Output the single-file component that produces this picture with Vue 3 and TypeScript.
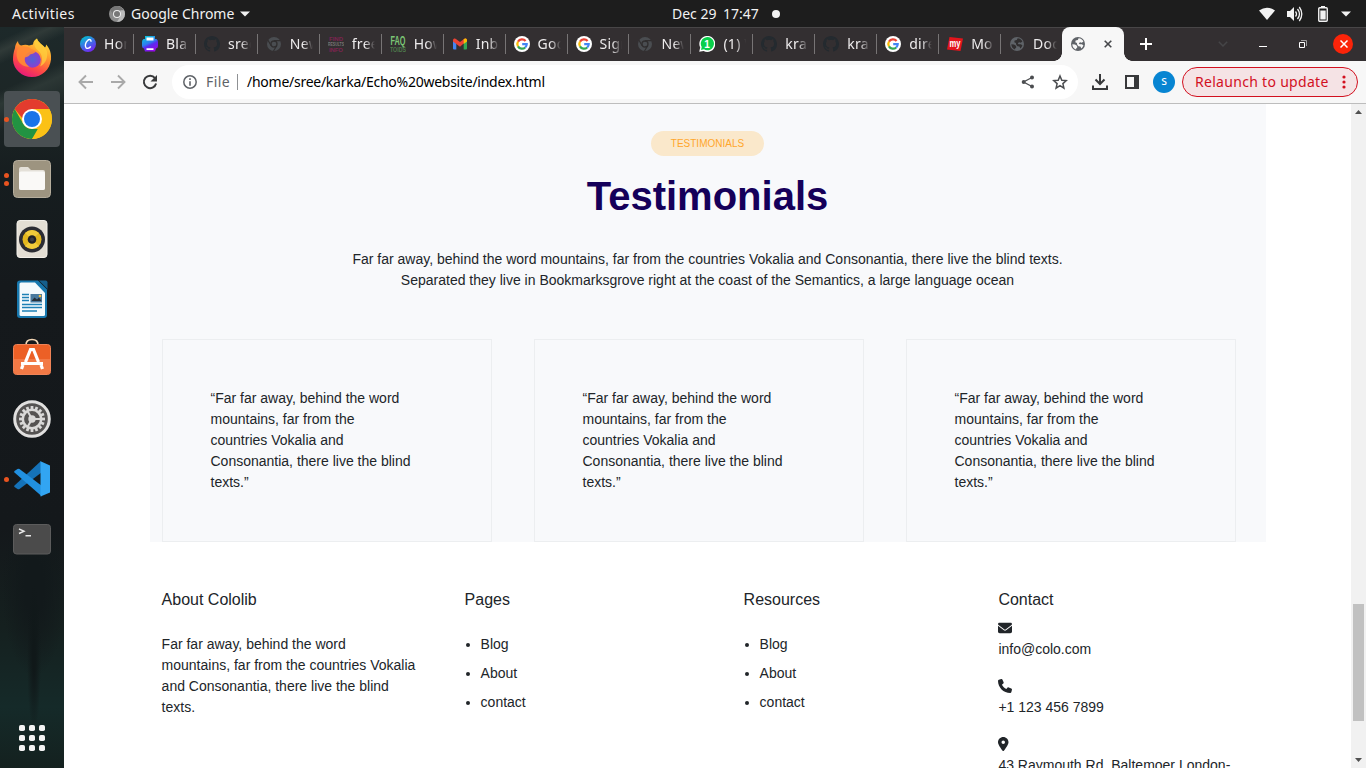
<script setup lang="ts">
interface Tab {
  icon: string
  title: string
}

const tabs: Tab[] = [
  { icon: 'canva', title: 'Hom' },
  { icon: 'printer', title: 'Bla' },
  { icon: 'github', title: 'sree' },
  { icon: 'chrome', title: 'New' },
  { icon: 'results', title: 'free' },
  { icon: 'faq', title: 'How' },
  { icon: 'gmail', title: 'Inb' },
  { icon: 'google', title: 'Goo' },
  { icon: 'google', title: 'Sign' },
  { icon: 'chrome', title: 'New' },
  { icon: 'whatsapp', title: '(1) W' },
  { icon: 'github', title: 'kra' },
  { icon: 'github', title: 'kra' },
  { icon: 'google', title: 'dire' },
  { icon: 'my', title: 'Mo' },
  { icon: 'globe', title: 'Doc' },
]

const quote = '“Far far away, behind the word\nmountains, far from the\ncountries Vokalia and\nConsonantia, there live the blind\ntexts.”'
const quotes: string[] = [quote, quote, quote]

const about = 'Far far away, behind the word\nmountains, far from the countries Vokalia\nand Consonantia, there live the blind\ntexts.'
const intro = 'Far far away, behind the word mountains, far from the countries Vokalia and Consonantia, there live the blind texts.\nSeparated they live in Bookmarksgrove right at the coast of the Semantics, a large language ocean'

const linkColumns = [
  { title: 'Pages', links: ['Blog', 'About', 'contact'] },
  { title: 'Resources', links: ['Blog', 'About', 'contact'] },
]

const contacts = [
  {
    text: 'info@colo.com',
    width: 14,
    box: '0 0 512 512',
    path: 'M48 64C21.500 64 0 85.500 0 112c0 15.100 7.100 29.300 19.200 38.400L236.800 313.600c11.400 8.500 27 8.500 38.400 0L492.800 150.400c12.100-9.100 19.200-23.300 19.200-38.400c0-26.500-21.500-48-48-48H48zM0 176V384c0 35.300 28.700 64 64 64H448c35.300 0 64-28.700 64-64V176L294.400 339.200c-22.800 17.100-54 17.100-76.800 0L0 176z',
  },
  {
    text: '+1 123 456 7899',
    width: 14,
    box: '0 0 512 512',
    path: 'M164.900 24.600c-7.700-18.600-28-28.500-47.400-23.200l-88 24C12.100 30.200 0 46 0 64C0 311.400 200.600 512 448 512c18 0 33.800-12.100 38.600-29.500l24-88c5.300-19.400-4.600-39.700-23.200-47.400l-96-40c-16.300-6.800-35.200-2.100-46.300 11.600L304.700 368C234.300 334.700 177.300 277.700 144 207.300L193.300 167c13.700-11.200 18.400-30 11.600-46.300l-40-96z',
  },
  {
    text: '43 Raymouth Rd. Baltemoer London-',
    width: 10.5,
    box: '0 0 384 512',
    path: 'M215.700 499.200C267 435 384 279.400 384 192C384 86 298 0 192 0S0 86 0 192c0 87.400 117 243 168.300 307.200c12.300 15.300 35.100 15.300 47.400 0zM192 128a64 64 0 1 1 0 128 64 64 0 1 1 0-128z',
  },
]

const dockDots: Record<string, number> = { chrome: 1, files: 2, code: 1 }
const dock: string[] = ['firefox', 'chrome', 'files', 'music', 'writer', 'software', 'settings', 'code', 'terminal']

const gridCells = [0, 10, 20]
const teeth = Array.from({ length: 16 }, (_, i) => i * 22.5)

const globeLand = 'M8.600 2.300c2.200 0 4 1.300 4.800 3.200l-1.600 1.300-1.700-.6-1.300 1 .8 1.100h2.200l1.600.9c-.3 1.300-1 2.400-2 3.200l-1-1.800-2-.4-1.200-1.500-.3-1.700-1.600-.8.3-1.700 2.200-.4zM2.300 8.300l2.700.2 1.900 1.300.5 1.500-1.200 1.300-.2 1C4 13 2.400 11 2.300 8.300z'
</script>

<template>
  <div class="desktop">
    <header class="panel">
      <div class="panel-left">
        <span class="activities">Activities</span>
        <svg class="app-icon" width="16" height="16" viewBox="0 0 16 16">
          <circle cx="8" cy="8" r="8" fill="#8c8c8c" />
          <path d="M8 0a8 8 0 0 1 8 8 8 8 0 0 1-8 8l3.500-6V4.300z" fill="#b9b9b9" />
          <path d="M8 4.200H15A8 8 0 0 0 1.200 3.800L4.500 9z" fill="#777" />
          <circle cx="8" cy="8" r="4" fill="#eee" />
          <circle cx="8" cy="8" r="3" fill="#777" />
        </svg>
        <span class="app-name">Google Chrome</span>
        <svg class="caret" width="10" height="6" viewBox="0 0 10 6"><path d="M0 .5h10L5 5.500z" fill="#f2f2f2" /></svg>
      </div>
      <div class="clock"><span>Dec 29</span><span>17:47</span><i class="notice"></i></div>
      <div class="panel-right">
        <svg width="16" height="14" viewBox="0 0 16 14"><path d="M0 3.500Q8-2.200 16 3.500L8 13z" fill="#f2f2f2" /></svg>
        <svg width="16" height="16" viewBox="0 0 16 16">
          <path d="M0 5h3l4-4v14l-4-4H0z" fill="#f2f2f2" />
          <path d="M8.500 5.500q2 2.500 0 5M10.500 3q4 5 0 10M12.300 1q5 7 0 14" fill="none" stroke="#f2f2f2" stroke-width="1.300" />
        </svg>
        <svg width="10" height="16" viewBox="0 0 10 16">
          <path d="M3 0h4v2H3z" fill="#f2f2f2" />
          <rect x=".75" y="1.750" width="8.500" height="13.500" rx="1" fill="none" stroke="#f2f2f2" stroke-width="1.400" />
          <path d="M2.300 4.500h5.400v9H2.300z" fill="#f2f2f2" />
        </svg>
        <svg class="caret" width="10" height="6" viewBox="0 0 10 6"><path d="M0 .5h10L5 5.500z" fill="#f2f2f2" /></svg>
      </div>
    </header>

    <div class="workspace">
      <aside class="dock">
        <div v-for="name in dock" :key="name" class="dock-item" :class="{ active: name === 'chrome' }">
          <div class="dots"><i v-for="n in dockDots[name] || 0" :key="n"></i></div>
          <svg width="56" height="56" viewBox="0 0 56 56">
            <template v-if="name === 'firefox'">
              <defs>
                <linearGradient id="ff-body" x1=".8" y1="0" x2=".3" y2="1">
                  <stop offset="0" stop-color="#ffe83e" /><stop offset=".35" stop-color="#ffa02e" />
                  <stop offset=".7" stop-color="#ff4a45" /><stop offset="1" stop-color="#e5177d" />
                </linearGradient>
                <radialGradient id="ff-core"><stop offset="0" stop-color="#4f63d8" /><stop offset="1" stop-color="#8b3fd0" /></radialGradient>
              </defs>
              <path d="M11 17c0-2 1-5 3-7 0 2 1 3.500 3 4.500 3-1 6-1 8 0l4-1c0-3 2-5 4-6 1 4 6 6 8 9 1-1 1-2 1-3 4 4 5.500 9 5 15-1 10-9 17.500-19 17.500S9.500 38.500 9 29c0-4 .5-8 2-12z" fill="url(#ff-body)" />
              <circle cx="28.500" cy="28.500" r="8.300" fill="url(#ff-core)" />
              <path d="M15 17c4-2 9-2 12 1 2 1 4 1 5 2 0 2-4 3-6 3.500-1 2-3 2-5 3-1 3 1 8 5 9-6 1-12-3-13-9-1-4 0-8 2-9.500z" fill="#ff8b35" opacity=".9" />
              <path d="M33 7.500c-4 4-3 9 1 12 5 4 5 11 2 16 6-3 8-9 7-15-2-6-9-8-10-13z" fill="#ffcf3e" opacity=".75" />
            </template>
            <template v-else-if="name === 'chrome'">
              <circle cx="28" cy="28" r="20" fill="#fbc116" />
              <path d="M10.680 18A20 20 0 0 1 45.320 18H28l-9 10z" fill="#e33b2e" />
              <path d="M10.680 18L19.340 33A10 10 0 0 0 28 38h8.660L28 48A20 20 0 0 1 10.680 18z" fill="#229342" />
              <path d="M36.660 33A10 10 0 0 0 36.660 23L34 18H45.320A20 20 0 0 1 28 48z" fill="#fbc116" />
              <circle cx="28" cy="28" r="10" fill="#fff" />
              <circle cx="28" cy="28" r="8" fill="#1a73e8" />
            </template>
            <template v-else-if="name === 'files'">
              <rect x="9.500" y="9.500" width="37" height="37" rx="4" fill="#9d9480" stroke="#b5ad9c" />
              <path d="M15 18q0-2 2-2h7l3 3h12q2 0 2 2v16q0 2-2 2H17q-2 0-2-2z" fill="#e4e0d8" />
              <rect x="15" y="20.500" width="26" height="18.500" rx="2" fill="#faf9f7" />
            </template>
            <template v-else-if="name === 'music'">
              <rect x="13" y="9.500" width="30" height="37" rx="3" fill="#e3ded4" stroke="#f3f0ea" />
              <circle cx="28" cy="28.500" r="13" fill="#2b2c33" />
              <circle cx="28" cy="28.500" r="9.500" fill="#e2b61e" />
              <path d="M28 28.500L21 22q7-6 14 0zM28 28.500l7 6.500q-7 6-14 0z" fill="#f5d142" opacity=".8" />
              <circle cx="28" cy="28.500" r="4.300" fill="#202126" />
              <circle cx="28" cy="28.500" r="2" fill="#3c3d44" />
            </template>
            <template v-else-if="name === 'writer'">
              <path d="M16 9.500h18l9 9V44q0 3-3 3H16q-3 0-3-3V12.500q0-3 3-3z" fill="#1878ae" />
              <path d="M35 9.500h6.500q2 0 2 2V18z" fill="#155f8c" />
              <path d="M15.500 13q0-1.500 1.500-1.500h14L41 22v21.500q0 1.500-1.500 1.500H17q-1.500 0-1.500-1.500z" fill="#f5fafc" />
              <path d="M18 23.500h7M18 26.500h7M18 29.500h7M18 33.500h20M18 36.500h20M18 40h15" stroke="#1d80b5" stroke-width="1.400" />
              <rect x="26.500" y="23" width="11.500" height="8.500" fill="#49799d" />
              <path d="M27.500 30l3-3.500 2.500 2 2-2 2.500 3.500z" fill="#252f38" />
              <circle cx="36" cy="25" r="1.300" fill="#f6be3e" />
            </template>
            <template v-else-if="name === 'software'">
              <path d="M22 14q0-5.500 6-5.500t6 5.500" fill="none" stroke="#f3d6b5" stroke-width="1.600" />
              <rect x="9.500" y="13.500" width="37" height="30" rx="3" fill="#ec6026" stroke="#ef8357" />
              <path d="M10 28h36v12.500q0 2.500-2.500 2.500h-31q-2.500 0-2.500-2.500z" fill="#f27945" />
              <path d="M21.500 31L26.500 18.500h3L34.500 31M17 32.500h22M19 34l-1.500 4M37 34l1.500 4" stroke="#fff" stroke-width="3.200" fill="none" />
            </template>
            <template v-else-if="name === 'settings'">
              <circle cx="28" cy="28" r="17.300" fill="#555352" stroke="#e1e0df" stroke-width="3" />
              <rect v-for="a in teeth" :key="a" x="26.600" y="15" width="2.800" height="4" fill="#d9d8d7" :transform="`rotate(${a} 28 28)`" />
              <circle cx="28" cy="28" r="9.200" fill="none" stroke="#d9d8d7" stroke-width="2.500" />
              <circle cx="28" cy="28" r="3.700" fill="#d9d8d7" />
              <path d="M28 28h9M28 28l-4.500-8M28 28l-4.500 8" stroke="#d9d8d7" stroke-width="2" />
            </template>
            <template v-else-if="name === 'code'">
              <path d="M37 10L10.500 34.500q-.7.700 0 1.400L13.500 38q1 .6 2 0L37.500 21.500z" fill="#1572b8" />
              <path d="M10.500 21.500q-.7-.7 0-1.400L13.500 18q1-.6 2 0L38 35v10.500z" fill="#2190e0" />
              <path d="M36.500 10.200L46 14.500v27l-9.500 4z" fill="#32a5f2" />
            </template>
            <template v-else>
              <rect x="9.500" y="13.500" width="37" height="29.500" rx="3" fill="#4b4b4b" stroke="#5c5c5c" />
              <path d="M15 18l5 2.200-5 2.300M21.500 24.800h5.500" stroke="#e8e8e8" stroke-width="1.400" fill="none" />
            </template>
          </svg>
        </div>
        <svg class="app-grid" width="26" height="26" viewBox="0 0 26 26">
          <template v-for="y in gridCells" :key="y">
            <rect v-for="x in gridCells" :key="x" :x="x" :y="y" width="6" height="6" rx="1.800" fill="#f4f4f4" />
          </template>
        </svg>
      </aside>

      <section class="browser">
        <div class="tab-strip">
          <div v-for="(tab, i) in tabs" :key="i" class="tab">
            <svg class="favicon" width="16" height="16" viewBox="0 0 16 16">
              <template v-if="tab.icon === 'canva'">
                <defs><linearGradient id="canva" x1=".2" y1="0" x2=".8" y2="1"><stop offset="0" stop-color="#00c4cc" /><stop offset=".5" stop-color="#3f6be8" /><stop offset="1" stop-color="#7d1af0" /></linearGradient></defs>
                <circle cx="8" cy="8" r="8" fill="url(#canva)" />
                <path d="M10.800 5.800c.8-2.300-1.600-2.900-3.200-1.300C5.500 6.500 4.600 10 6 11.700c1.400 1.300 3.600.5 4.700-1.400" fill="none" stroke="#fff" stroke-width="1.400" />
              </template>
              <template v-else-if="tab.icon === 'printer'">
                <defs><linearGradient id="printer" x1=".2" y1="0" x2=".7" y2="1"><stop offset="0" stop-color="#07c9d8" /><stop offset=".45" stop-color="#2f7cf0" /><stop offset=".6" stop-color="#5a2cf0" /><stop offset="1" stop-color="#9a08e8" /></linearGradient></defs>
                <path d="M3 0h10v3h1.500Q16 4 16 6v4q0 2-2 2.500L13 15.500H3l-1-3Q0 12 0 10V6q0-2 1.500-3H3z" fill="url(#printer)" />
                <path d="M4.500 1.500h7v3h-7zM4.500 12.300h7v1.800h-7z" fill="#fff" />
              </template>
              <path v-else-if="tab.icon === 'github'" d="M8 0C3.580 0 0 3.580 0 8c0 3.540 2.290 6.530 5.470 7.590.4.070.55-.17.55-.38v-1.490c-2.010.37-2.530-.49-2.690-.94-.09-.23-.48-.94-.82-1.130-.28-.15-.68-.52-.01-.53.63-.01 1.080.58 1.230.82.72 1.210 1.870.87 2.330.66.070-.52.280-.87.510-1.070-1.780-.2-3.640-.89-3.640-3.950 0-.87.310-1.590.82-2.150-.08-.2-.36-1.020.08-2.120 0 0 .67-.21 2.200.82a7.600 7.600 0 0 1 4 0c1.530-1.040 2.200-.82 2.200-.82.440 1.100.160 1.920.080 2.120.510.560.820 1.270.820 2.150 0 3.070-1.870 3.750-3.650 3.950.290.250.540.730.540 1.480v2.200c0 .210.150.460.550.380A8 8 0 0 0 16 8c0-4.420-3.580-8-8-8z" fill="#242a2f" />
              <template v-else-if="tab.icon === 'chrome'">
                <circle cx="8" cy="8" r="7" fill="#4a4d51" />
                <circle cx="8" cy="8" r="3" fill="#4a4d51" stroke="#302e2f" stroke-width="1.300" />
                <path d="M8 4.700h6.500M5.200 9.700L2 4.200M10.700 9.700L7.500 15" stroke="#302e2f" stroke-width="1.200" />
              </template>
              <template v-else-if="tab.icon === 'results'">
                <text x="8" y="5" class="mini pink" font-size="6" textLength="14">FIND</text>
                <text x="8" y="10" class="mini grey" font-size="5" textLength="16" lengthAdjust="spacingAndGlyphs">RESULTS</text>
                <text x="8" y="15.500" class="mini pink" font-size="6" textLength="14">INFO</text>
              </template>
              <template v-else-if="tab.icon === 'faq'">
                <text x="8" y="8.800" class="mini green" font-size="12" textLength="15" lengthAdjust="spacingAndGlyphs">FAQ</text>
                <text x="8" y="15.800" class="mini dim" font-size="8" textLength="16" lengthAdjust="spacingAndGlyphs">TOIDS</text>
              </template>
              <template v-else-if="tab.icon === 'gmail'">
                <path d="M1 4v8.500q0 1 1 1h2.300V6.500z" fill="#4285f4" />
                <path d="M15 4v8.500q0 1-1 1h-2.300V6.500z" fill="#34a853" />
                <path d="M1 4.500C1 2.500 3 2 4.300 3.200L8 6l3.700-2.800C13 2 15 2.500 15 4.500L8 10.700 1 5.500z" fill="#ea4335" />
                <path d="M11.700 3.200C13 2 15 2.500 15 4.500v1L11.700 8z" fill="#fbbc04" />
              </template>
              <template v-else-if="tab.icon === 'google'">
                <circle cx="8" cy="8" r="8" fill="#fff" />
                <g fill="none" stroke-width="2.200">
                  <path d="M11.600 5A4.700 4.700 0 0 0 4 5.600" stroke="#ea4335" />
                  <path d="M4 5.600a4.700 4.700 0 0 0 0 4.800" stroke="#fbbc05" />
                  <path d="M4 10.400a4.700 4.700 0 0 0 7.200 1.100" stroke="#34a853" />
                  <path d="M11.200 11.500A4.700 4.700 0 0 0 12.700 8.200H8.200" stroke="#4285f4" />
                </g>
              </template>
              <template v-else-if="tab.icon === 'whatsapp'">
                <path d="M.2 15.800l1-4.200A8 8 0 1 1 4.600 15z" fill="#fff" />
                <path d="M2 14l.7-3A6.600 6.600 0 1 1 5 13.300z" fill="#08cf4a" />
                <text x="8" y="11.500" class="mini white" font-size="10">1</text>
              </template>
              <template v-else-if="tab.icon === 'my'">
                <path d="M2.500 1L16 2.500 13.500 15 0 13.500z" fill="#e3151c" />
                <text x="8" y="10.500" class="mini white" font-size="11" textLength="11" lengthAdjust="spacingAndGlyphs">my</text>
              </template>
              <template v-else>
                <circle cx="8" cy="8" r="7" fill="#5f6368" />
                <path :d="globeLand" fill="#302e2f" />
              </template>
            </svg>
            <span class="tab-title">{{ tab.title }}</span>
            <i v-if="i < tabs.length - 1" class="divider"></i>
          </div>
          <div class="tab-active">
            <svg width="14" height="14" viewBox="1 1 14 14">
              <circle cx="8" cy="8" r="7" fill="#5f6368" />
              <path :d="globeLand" fill="#f7f7f7" />
            </svg>
            <svg width="8" height="8" viewBox="0 0 8 8"><path d="M.7.7l6.600 6.600M7.300.7L.7 7.300" stroke="#45474a" stroke-width="1.600" /></svg>
          </div>
          <svg class="new-tab" width="12" height="12" viewBox="0 0 12 12"><path d="M6 0v12M0 6h12" stroke="#fff" stroke-width="2" /></svg>
          <div class="window-controls">
            <svg width="10" height="6" viewBox="0 0 10 6"><path d="M.8.800L5 5 9.200.8" fill="none" stroke="#454547" stroke-width="1.500" /></svg>
            <svg width="8" height="8" viewBox="0 0 8 8"><path d="M0 6.500h8" stroke="#fff" /></svg>
            <svg width="8" height="8" viewBox="0 0 8 8"><path d="M.5 2.500h5v5h-5z" fill="none" stroke="#fff" /><path d="M2 .5h5.500V6" fill="none" stroke="#aaa" stroke-width=".9" /></svg>
            <span class="close"><svg width="8" height="8" viewBox="0 0 8 8"><path d="M.5.5l7 7M7.500.5l-7 7" stroke="#fff" stroke-width="1.500" /></svg></span>
          </div>
        </div>

        <div class="toolbar">
          <div class="nav">
            <svg width="16" height="16" viewBox="0 0 16 16"><path d="M15 8H2M8 1.500L1.500 8 8 14.500" fill="none" stroke="#a9a9a9" stroke-width="1.900" /></svg>
            <svg width="16" height="16" viewBox="0 0 16 16"><path d="M1 8h13M8 1.500L14.500 8 8 14.500" fill="none" stroke="#a9a9a9" stroke-width="1.900" /></svg>
            <svg width="16" height="16" viewBox="0 0 16 16"><path d="M13 4.100A6.200 6.200 0 1 0 14.100 9.500" fill="none" stroke="#38393b" stroke-width="2" /><path d="M15 1v6.500H8.500z" fill="#38393b" /></svg>
          </div>
          <div class="omnibox">
            <svg width="14" height="14" viewBox="0 0 14 14"><circle cx="7" cy="7" r="6.200" fill="none" stroke="#5f6368" stroke-width="1.500" /><path d="M7 3.200v1.700M7 6.200v4.600" stroke="#5f6368" stroke-width="1.600" /></svg>
            <span class="scheme">File</span>
            <i class="scheme-divider"></i>
            <span class="url">/home/sree/karka/Echo%20website/index.html</span>
            <svg class="share" width="14" height="14" viewBox="0 0 14 14"><path d="M11 2.500L2.500 7l8.500 4.500" fill="none" stroke="#4b4d50" stroke-width="1.300" /><circle cx="11" cy="2.500" r="2" fill="#4b4d50" /><circle cx="2.700" cy="7" r="2" fill="#4b4d50" /><circle cx="11" cy="11.500" r="2" fill="#4b4d50" /></svg>
            <svg class="star" width="16" height="16" viewBox="0 0 16 16"><path d="M8 2l1.800 4.200 4.500.4-3.400 3 1 4.500L8 11.700l-3.900 2.400 1-4.500-3.400-3 4.500-.4z" fill="none" stroke="#4b4d50" stroke-width="1.500" /></svg>
          </div>
          <svg class="download" width="16" height="16" viewBox="0 0 16 16"><path d="M8 0v10M3.500 5.500L8 10l4.500-4.500M1 11.500V15h14v-3.500" fill="none" stroke="#38393b" stroke-width="2" /></svg>
          <svg class="side-panel" width="14" height="14" viewBox="0 0 14 14"><path d="M1 1h12v12H1z" fill="none" stroke="#38393b" stroke-width="2" /><path d="M9 0h5v14H9z" fill="#38393b" /></svg>
          <span class="avatar">s</span>
          <div class="relaunch">
            <span>Relaunch to update</span>
            <svg width="4" height="14" viewBox="0 0 4 14"><circle cx="2" cy="2" r="1.600" fill="#d2101f" /><circle cx="2" cy="7" r="1.600" fill="#d2101f" /><circle cx="2" cy="12" r="1.600" fill="#d2101f" /></svg>
          </div>
        </div>

        <div class="viewport">
          <main class="page">
            <section class="testimonials">
              <span class="badge">TESTIMONIALS</span>
              <h1>Testimonials</h1>
              <p class="intro">{{ intro }}</p>
              <div class="cards">
                <article v-for="(q, i) in quotes" :key="i" class="card">{{ q }}</article>
              </div>
            </section>
            <footer class="footer">
              <div>
                <h2>About Cololib</h2>
                <p class="about">{{ about }}</p>
              </div>
              <div v-for="col in linkColumns" :key="col.title">
                <h2>{{ col.title }}</h2>
                <ul>
                  <li v-for="link in col.links" :key="link">{{ link }}</li>
                </ul>
              </div>
              <div class="contact">
                <h2>Contact</h2>
                <div v-for="c in contacts" :key="c.text" class="contact-row">
                  <span class="contact-icon"><svg :width="c.width" height="14" :viewBox="c.box"><path :d="c.path" fill="#212529" fill-rule="evenodd" /></svg></span>
                  <span>{{ c.text }}</span>
                </div>
              </div>
            </footer>
          </main>
          <div class="scrollbar">
            <svg width="7" height="4" viewBox="0 0 7 4"><path d="M0 4L3.500 0 7 4z" fill="#505050" /></svg>
            <i class="thumb"></i>
            <svg width="7" height="4" viewBox="0 0 7 4"><path d="M0 0l3.500 4L7 0z" fill="#505050" /></svg>
          </div>
        </div>
      </section>
    </div>
  </div>
</template>

<style>
body {
  margin: 0;
  overflow: hidden;
}
</style>

<style scoped>
.desktop {
  width: 1366px;
  height: 768px;
  display: flex;
  flex-direction: column;
  overflow: hidden;
  background: #1d1d1d;
  font-family: 'Noto Sans', 'Open Sans', sans-serif;
  font-size: 14px;
}
.desktop * {
  box-sizing: border-box;
}
svg {
  display: block;
  flex: none;
}
.panel {
  height: 27px;
  flex: none;
  display: grid;
  grid-template-columns: 672px 1fr auto;
  align-items: center;
  background: #1d1d1d;
  color: #f2f2f2;
  line-height: 27px;
}
.panel-left,
.clock,
.panel-right {
  display: flex;
  align-items: center;
}
.panel-left span,
.clock span {
  padding-bottom: 1px;
  line-height: 25px;
}
.panel-left {
  padding-left: 12px;
}
.activities {
  width: 97px;
  letter-spacing: 0.45px;
}
.app-name {
  margin-left: 6px;
  width: 109px;
}
.clock span {
  width: 51px;
}
.clock span + span {
  width: 49px;
}
.notice {
  width: 8px;
  height: 8px;
  border-radius: 50%;
  background: #f2f2f2;
}
.panel-right {
  gap: 12px;
  padding-right: 15px;
}
.panel-right svg:nth-child(3) {
  margin-left: 3px;
}
.panel-right .caret {
  margin-left: 1px;
}
.workspace {
  flex: 1;
  min-height: 0;
  display: flex;
}
.dock {
  width: 64px;
  flex: none;
  display: flex;
  flex-direction: column;
  align-items: center;
  gap: 4px;
  padding: 4px 0 17px;
  background:
    radial-gradient(ellipse 7px 75px at 34px 630px, #101819 20%, transparent 100%),
    radial-gradient(ellipse 32px 90px at 34px 560px, #12191b 30%, transparent 100%),
    linear-gradient(155deg, transparent 0 12px, #303a38 22px, transparent 34px 58px, #2c3735 70px, transparent 95px),
    linear-gradient(#1d292a 0, #1d2626 80px, #161d1f 150px, #15191c 260px, #14181b 500px, #15201f 600px, #152a29 680px, #14211f 741px);
}
.dock-item {
  position: relative;
  width: 56px;
  height: 56px;
  border-radius: 4px;
}
.dock-item.active {
  background: #4a5053;
}
.dots {
  position: absolute;
  left: 0;
  top: 0;
  height: 100%;
  display: flex;
  flex-direction: column;
  justify-content: center;
  gap: 3px;
}
.dots i {
  width: 5px;
  height: 5px;
  border-radius: 50%;
  background: #e95420;
}
.app-grid {
  margin-top: auto;
}
.browser {
  flex: 1;
  min-width: 0;
  display: flex;
  flex-direction: column;
}
.tab-strip {
  height: 34px;
  flex: none;
  display: flex;
  align-items: center;
  padding: 0 0 1px 8px;
  border-top: 1px solid #484647;
  background: #332f31;
}
.tab {
  width: 61.940px;
  flex: none;
  display: flex;
  align-items: center;
  padding-left: 8px;
  height: 32px;
}
.tab-title {
  width: 24px;
  margin-left: 8px;
  padding-bottom: 1px;
  overflow: hidden;
  white-space: nowrap;
  color: #eeeced;
  letter-spacing: 0.3px;
  mask-image: linear-gradient(90deg, #000 55%, transparent);
}
.divider {
  width: 1px;
  height: 20px;
  margin-left: 6px;
  background: #777475;
}
.tab-active {
  position: relative;
  width: 62px;
  height: 34px;
  flex: none;
  display: flex;
  align-items: center;
  justify-content: space-between;
  margin-left: -1px;
  padding: 0 12px 0 9px;
  border-radius: 8px 8px 0 0;
  background: #f7f7f7;
}
.tab-active::before,
.tab-active::after {
  content: '';
  position: absolute;
  bottom: 0;
  width: 8px;
  height: 8px;
}
.tab-active::before {
  left: -8px;
  background: radial-gradient(circle at 0 0, transparent 7.500px, #f7f7f7 8px);
}
.tab-active::after {
  right: -8px;
  background: radial-gradient(circle at 100% 0, transparent 7.500px, #f7f7f7 8px);
}
.new-tab {
  margin-left: 16px;
}
.window-controls {
  margin-left: auto;
  margin-right: 13px;
  display: flex;
  align-items: center;
  gap: 32px;
}
.window-controls svg:nth-child(1) {
  margin-right: -1px;
}
.close {
  width: 20px;
  height: 20px;
  margin-left: -6px;
  display: grid;
  place-items: center;
  border-radius: 50%;
  background: #fb2409;
}
.mini {
  font-family: 'Liberation Sans', sans-serif;
  font-weight: 700;
  text-anchor: middle;
}
.pink {
  fill: #7c2450;
}
.grey {
  fill: #777;
}
.green {
  fill: #7cc576;
}
.dim {
  fill: #4e7a4c;
}
.white {
  fill: #fff;
}
.toolbar {
  height: 43px;
  flex: none;
  display: flex;
  align-items: center;
  padding-left: 14px;
  border-bottom: 1px solid #bdbdbd;
  background: #f7f7f7;
}
.nav {
  width: 94px;
  display: flex;
  gap: 16px;
}
.omnibox {
  width: 906px;
  height: 34px;
  flex: none;
  display: flex;
  align-items: center;
  padding-left: 11px;
  border-radius: 17px;
  background: #fff;
}
.scheme {
  width: 31px;
  margin-left: 9px;
  padding-bottom: 2px;
  color: #5f6368;
  letter-spacing: 0.4px;
}
.scheme-divider {
  width: 1px;
  height: 16px;
  background: #8f9194;
}
.url {
  margin-left: 9px;
  padding-bottom: 2px;
  color: #000;
  letter-spacing: -0.260px;
}
.share {
  margin-left: auto;
}
.star {
  margin: 0 10px 0 17px;
}
.download {
  margin-left: 14px;
}
.side-panel {
  margin-left: 17px;
}
.avatar {
  width: 22px;
  height: 22px;
  margin-left: 14px;
  border-radius: 50%;
  background: #0785d2;
  color: #fff;
  font-size: 12px;
  line-height: 20px;
  text-align: center;
}
.relaunch {
  width: 176px;
  height: 30px;
  margin-left: 7px;
  padding: 0 11px 0 12px;
  display: flex;
  align-items: center;
  justify-content: space-between;
  border: 1px solid #d2101f;
  border-radius: 15px;
  background: #f5e3e5;
  color: #d2101f;
  letter-spacing: 0.300px;
  white-space: nowrap;
}
.relaunch span {
  padding-bottom: 2px;
}
.viewport {
  flex: 1;
  min-height: 0;
  display: flex;
  overflow: hidden;
  background: #fff;
}
.page {
  width: 1287px;
  flex: none;
  padding-left: 86px;
  color: #212529;
  font-family: 'Liberation Sans', Arial, sans-serif;
  font-size: 14px;
  line-height: 21px;
}
.page p,
.page h1,
.page h2,
.page ul {
  margin: 0;
  padding: 0;
}
.testimonials {
  width: 1116px;
  height: 438px;
  padding: 27px 0 0;
  display: flex;
  flex-direction: column;
  align-items: center;
  background: #f8f9fb;
}
.badge {
  height: 25px;
  padding: 5px 20px;
  margin-right: 1px;
  border-radius: 13px;
  background: #fae8cb;
  color: #ffa62b;
  font-size: 10px;
  line-height: 15px;
}
.page h1 {
  margin: 16px 1px 0 0;
  color: #15005a;
  font-size: 40px;
  line-height: 48px;
}
.page .intro {
  margin: 29px 1px 0 0;
  text-align: center;
  white-space: pre;
}
.cards {
  width: 1074px;
  margin-top: 48px;
  margin-right: 18px;
  display: grid;
  grid-template-columns: repeat(3, 330px);
  gap: 42px;
}
.card {
  height: 203px;
  padding: 48px 47.500px;
  border: 1px solid #eceef0;
  white-space: pre;
}
.footer {
  display: grid;
  grid-template-columns: 303px 279px 254.800px 1fr;
  padding: 48px 0 0 11.600px;
}
.page h2 {
  font-size: 16px;
  font-weight: 400;
  line-height: 19px;
}
.page .about {
  margin-top: 25px;
  white-space: pre;
}
.page ul {
  margin-top: 25px;
  padding-left: 16px;
}
.page li {
  margin-bottom: 8px;
}
.contact h2 {
  margin-bottom: 9px;
}
.contact-row {
  display: flex;
  flex-direction: column;
  margin-bottom: 16px;
  white-space: nowrap;
}
.contact-icon {
  height: 21px;
  padding-top: 3px;
}
.scrollbar {
  width: 15px;
  display: flex;
  flex-direction: column;
  align-items: center;
  padding: 6px 0 6px;
  background: #f1f1f1;
}
.thumb {
  width: 11px;
  height: 117px;
  margin: 490px 0 auto;
  background: #c1c1c1;
}
</style>
